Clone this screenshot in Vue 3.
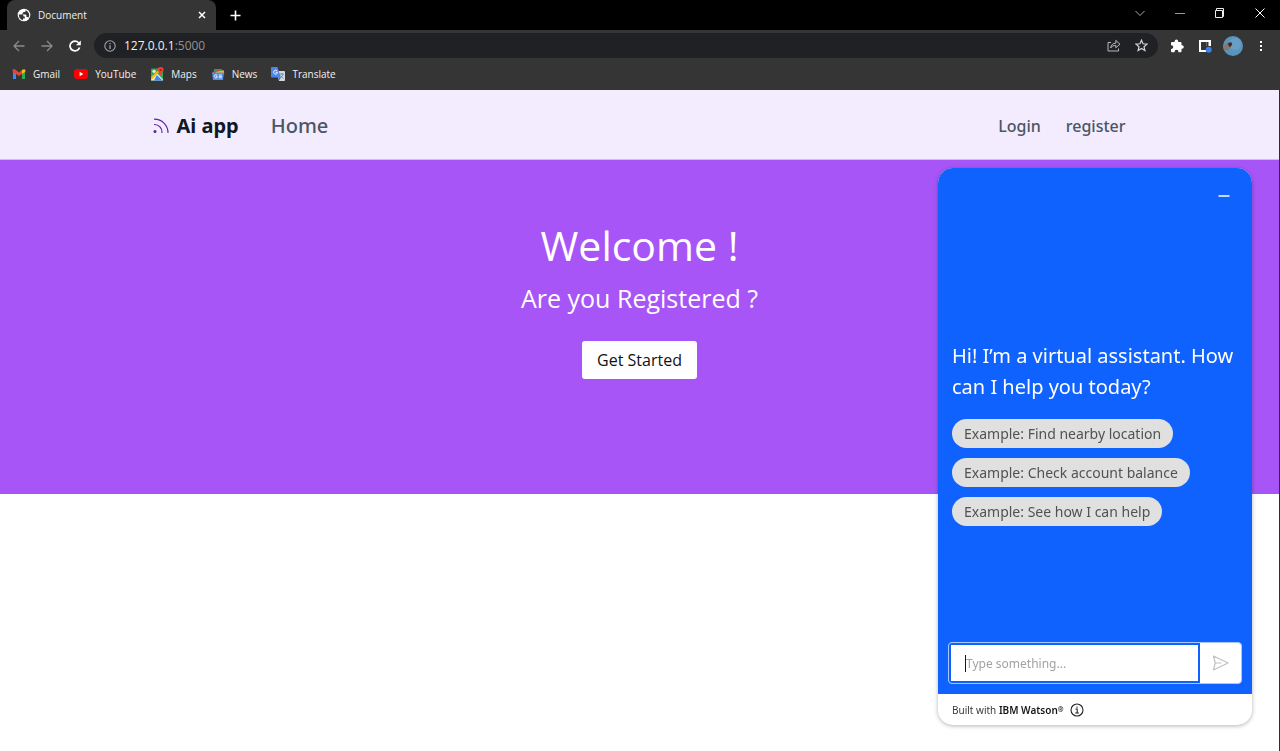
<script setup>
import { ref } from 'vue'

const message = ref('')
const bookmarks = ['Gmail', 'YouTube', 'Maps', 'News', 'Translate']
const examples = [
  'Example: Find nearby location',
  'Example: Check account balance',
  'Example: See how I can help',
]
</script>

<template>
  <div class="window">
    <header class="browser">
      <div class="tabstrip">
        <div class="tab">
          <svg class="globe" viewBox="0 0 14 14" width="14" height="14" aria-hidden="true">
            <circle cx="7" cy="7" r="6.3" fill="#fff" />
            <path d="M1.8 6.6 H4.6 Q6.6 6.6 6.6 8.6 H7.8 V10.4 H6 V12.2 Q2 11.4 1.8 6.6 Z M8.6 1.9 V3 Q8.6 4 7.4 4 H6.2 V5.4 H5 V6.4 H8.6 Q9.4 6.4 9.4 7.4 V9 H10.4 Q11 9 11.3 9.8 Q14 5 8.6 1.9 Z" fill="#353535" />
          </svg>
          <span class="tab-title">Document</span>
          <button class="plain" aria-label="Close tab">
            <svg viewBox="0 0 8 8" width="8" height="8"><path d="M1 1 L7 7 M7 1 L1 7" stroke="#fff" stroke-width="1.5" /></svg>
          </button>
        </div>
        <button class="plain new-tab" aria-label="New tab">
          <svg viewBox="0 0 11 11" width="11" height="11"><path d="M5.5 0.5 V10.5 M0.5 5.5 H10.5" stroke="#fff" stroke-width="1.6" /></svg>
        </button>
        <div class="window-controls">
          <button class="plain" aria-label="Search tabs">
            <svg viewBox="0 0 12 12" width="12" height="12"><path d="M1.5 4 L6 8.5 L10.5 4" fill="none" stroke="#aaa" /></svg>
          </button>
          <button class="plain" aria-label="Minimize">
            <svg viewBox="0 0 12 12" width="12" height="12"><path d="M1 6.5 H11" stroke="#999" /></svg>
          </button>
          <button class="plain" aria-label="Restore">
            <svg viewBox="0 0 12 12" width="12" height="12"><path d="M1.5 3.5 H8.5 V10.5 H1.5 Z M2.5 3 V1.5 H9.5 V9.5 H9" fill="none" stroke="#eee" /></svg>
          </button>
          <button class="plain" aria-label="Close">
            <svg viewBox="0 0 12 12" width="12" height="12"><path d="M1.5 1.5 L10.5 10.5 M10.5 1.5 L1.5 10.5" stroke="#fff" /></svg>
          </button>
        </div>
      </div>

      <div class="toolbar">
        <button class="plain" aria-label="Back">
          <svg viewBox="0 0 12 12" width="12" height="12"><path d="M11.5 6 H1 M6 1 L1 6 L6 11" fill="none" stroke="#8b8b8b" stroke-width="1.3" /></svg>
        </button>
        <button class="plain" aria-label="Forward">
          <svg viewBox="0 0 12 12" width="12" height="12"><path d="M0.5 6 H11 M6 1 L11 6 L6 11" fill="none" stroke="#8b8b8b" stroke-width="1.3" /></svg>
        </button>
        <button class="plain" aria-label="Reload">
          <svg viewBox="0 0 12 12" width="12" height="12"><path d="M10.6 7.4 A4.9 4.9 0 1 1 9.6 2.7" fill="none" stroke="#fff" stroke-width="1.7" /><path d="M11.8 0.4 V5.3 H6.9 Z" fill="#fff" /></svg>
        </button>
        <div class="address">
          <svg viewBox="0 0 12 12" width="12" height="12" aria-hidden="true"><circle cx="6" cy="6" r="5.2" fill="none" stroke="#a0a4a8" stroke-width="1.1" /><path d="M6 5.2 V9 M6 3 V4.2" stroke="#a0a4a8" stroke-width="1.3" /></svg>
          <span class="url">127.0.0.1<span class="port">:5000</span></span>
          <button class="plain" aria-label="Share">
            <svg viewBox="0 0 14 13" width="14" height="13"><path d="M4 3.5 H1 V12 H11.5 V9.5 M3.6 9 C4 5.8 6 4.2 8.8 4.2 V1.4 L13 5.2 L8.8 8.8 V6.4 C6.4 6.4 4.8 7.2 3.6 9 Z" fill="none" stroke="#b8b8b8" /></svg>
          </button>
          <button class="plain" aria-label="Bookmark this page">
            <svg viewBox="0 0 13 13" width="13" height="13"><path d="M6.5 1.2 L8 4.8 L12 5.1 L9 7.7 L9.9 11.6 L6.5 9.5 L3.1 11.6 L4 7.7 L1 5.1 L5 4.8 Z" fill="none" stroke="#d5d5d5" stroke-width="1.2" /></svg>
          </button>
        </div>
        <div class="extensions">
          <button class="plain" aria-label="Extensions">
            <svg viewBox="0 0 14 14" width="14" height="14"><path d="M1 4 Q1 3 2 3 H4.6 V2.4 A1.8 1.8 0 0 1 8.2 2.4 V3 H10.5 Q11.5 3 11.5 4 V6.2 H12 A1.8 1.8 0 0 1 12 9.8 H11.5 V12.2 Q11.5 13.2 10.5 13.2 H8.4 V12.6 A1.9 1.9 0 0 0 4.6 12.6 V13.2 H2 Q1 13.2 1 12.2 V9.9 H1.5 A1.8 1.8 0 0 0 1.5 6.3 H1 Z" fill="#fff" /></svg>
          </button>
          <button class="plain" aria-label="Side panel">
            <svg viewBox="0 0 14 14" width="14" height="14"><path d="M1 1 H13 V7 H8.5 V3 H3 V11 H8 V13 H1 Z" fill="#fff" /><path d="M8.5 3 H11 V7 H8.5 Z" fill="#353535" /><path d="M9 1 H13 V7 H10.5 V3 H9 Z" fill="#fff" /><circle cx="10.7" cy="10.7" r="3" fill="#3b82ec" /></svg>
          </button>
          <button class="plain" aria-label="Profile">
            <svg viewBox="0 0 20 20" width="20" height="20"><circle cx="10" cy="10" r="10" fill="#5795bd" /><circle cx="12" cy="8" r="6" fill="#679fc5" /><path d="M0.2 11 L4 6.8 L8.2 6 L9.6 8.2 L7.8 11.6 L4.7 14 L1.4 14.5 Z" fill="#88756d" /><path d="M5 7.2 L8.4 6.2 L9 8.5 L7 11 L5.6 9.5 Z" fill="#332b31" /></svg>
          </button>
          <button class="plain" aria-label="Menu">
            <svg viewBox="0 0 4 12" width="4" height="12"><path d="M1 1 h2 v2 h-2z M1 5 h2 v2 h-2z M1 9 h2 v2 h-2z" fill="#fff" /></svg>
          </button>
        </div>
      </div>

      <nav class="bookmarks" aria-label="Bookmarks">
        <a v-for="name in bookmarks" :key="name" href="#">
          <svg v-if="name === 'Gmail'" viewBox="0 0 14 14" width="14" height="14"><path d="M1 3 V12 H4 V5.5 Z" fill="#4285f4" /><path d="M13 3 V12 H10 V5.5 Z" fill="#34a853" /><path d="M0.7 3 Q1.5 1.5 3.2 2.5 L7 5.5 L10 3 V6.7 L7 9 L0.7 4.8 Z" fill="#ea4335" /><path d="M10 3 Q12.8 1.2 13.3 3.3 V4.8 L10 7 Z" fill="#fbbc04" /></svg>
          <svg v-else-if="name === 'YouTube'" viewBox="0 0 14 14" width="14" height="14"><rect y="2" width="14" height="10" rx="3" fill="#f00" /><path d="M5.6 4.8 L9.4 7 L5.6 9.2 Z" fill="#fff" /></svg>
          <svg v-else-if="name === 'Maps'" viewBox="0 0 14 14" width="14" height="14"><rect x="1" y="1.5" width="12" height="12" rx="1" fill="#34a853" /><path d="M1 12.5 L7.3 6.5 L13 12.5 V13.5 H1 Z" fill="#e8eaed" /><path d="M6.8 8 L12.6 13.5 H4 Z" fill="#4285f4" /><path d="M1 10 L9 2.5 L10 4 L1.5 12.8 Z" fill="#fbbc04" /><circle cx="4" cy="4.3" r="1.6" fill="#e8f4e8" /><path d="M10.6 0 A3 3 0 0 1 13.6 3 C13.6 5 11 5.8 10.6 9 C10.2 5.8 7.6 5 7.6 3 A3 3 0 0 1 10.6 0" fill="#ea4335" /><circle cx="10.6" cy="3" r="1" fill="#8c1d18" /></svg>
          <svg v-else-if="name === 'News'" viewBox="0 0 14 14" width="14" height="14"><path d="M3 2 H11 V6 H3 Z" fill="#2b9b56" /><path d="M1.5 5 L8.5 2.4 L10 6 L2 7 Z" fill="#ea4335" /><path d="M5 5 L12.8 3.2 L13.2 7 H5 Z" fill="#fbbc04" /><path d="M1 5.5 H13 L12 13 H2 Z" fill="#548fe9" /><path d="M6.1 8.2 A1.6 1.6 0 1 0 6.1 10.5 V9.4 H5 M7.8 8 H10.8 M7.8 9.4 H11 M7.8 10.8 H10.8" fill="none" stroke="#fff" stroke-width="0.8" /></svg>
          <svg v-else viewBox="0 0 14 14" width="14" height="14"><path d="M5 4 H13 Q14 4 14 5 V13 Q14 14 13 14 H8 Z" fill="#d5d9df" /><path d="M0 1 Q0 0 1 0 H6.5 L9.8 10.5 H1 Q0 10.5 0 9.5 Z" fill="#4b86e8" /><path d="M6.3 4 A2 2 0 1 0 6.4 6.2 V5.3 H4.7" fill="none" stroke="#fff" stroke-width="0.9" /><path d="M8.7 7 H13 M10.8 6 V7 M12 7 Q11.4 9.8 8.8 11.6 M9.5 8.5 L12.5 11.8" fill="none" stroke="#6b7f91" stroke-width="0.8" /><path d="M7.2 10.5 H9.8 L8 13.8 Z" fill="#3367d6" /></svg>
          {{ name }}
        </a>
      </nav>
    </header>

    <div class="page">
      <nav class="site-nav" aria-label="Main">
        <a class="brand" href="#">
          <svg viewBox="0 0 16 16" width="16" height="16" aria-hidden="true"><circle cx="2" cy="13.5" r="1.5" fill="#5b21a0" /><path d="M1.5 6.5 A7.5 7.5 0 0 1 9 14.5 M1.5 1.2 A13.5 13.5 0 0 1 15 14.5" fill="none" stroke="#5b21a0" stroke-width="1.2" stroke-linecap="round" /></svg>
          Ai app
        </a>
        <a class="home" href="#">Home</a>
        <div class="account">
          <a href="#">Login</a>
          <a href="#">register</a>
        </div>
      </nav>

      <main class="hero">
        <h1>Welcome !</h1>
        <h2>Are you Registered ?</h2>
        <button class="start">Get Started</button>
      </main>
    </div>

    <aside class="chat" aria-label="Virtual assistant">
      <div class="chat-home">
        <button class="plain minimize" aria-label="Minimize chat">
          <svg viewBox="0 0 12 12" width="12" height="12"><path d="M0.5 6 H11.5" stroke="#fff" stroke-width="1.3" /></svg>
        </button>
        <div class="conversation">
          <p class="greeting">Hi! I’m a virtual assistant. How can I help you today?</p>
          <button v-for="text in examples" :key="text" class="example">{{ text }}</button>
        </div>
        <form class="composer" @submit.prevent>
          <div class="field">
            <span class="caret"></span>
            <input v-model="message" type="text" placeholder="Type something..." aria-label="Type something" />
          </div>
          <button class="plain send" aria-label="Send">
            <svg viewBox="0 0 18 16" width="18" height="16"><path d="M1.5 1 L16 8 L1.5 15 L3.2 8 Z M3.2 8 H9.5" fill="none" stroke="#c1c1c1" stroke-width="1.2" stroke-linejoin="round" /></svg>
          </button>
        </form>
      </div>
      <footer class="chat-footer">
        <span>Built with <strong>IBM Watson<span class="mark">®</span></strong></span>
        <button class="plain" aria-label="About">
          <svg viewBox="0 0 14 14" width="14" height="14"><circle cx="7" cy="7" r="6" fill="none" stroke="#222" stroke-width="1.1" /><path d="M5.5 6 H7.2 V10 M5.2 10 H8.9 M7 3.4 V4.7" fill="none" stroke="#222" stroke-width="1.1" /></svg>
        </button>
      </footer>
    </aside>
  </div>
</template>

<style>
body {
  margin: 0;
  background: #fff;
}
</style>

<style scoped>
* {
  box-sizing: border-box;
}

.window {
  display: flex;
  flex-direction: column;
  min-height: 100vh;
  font-family: 'Open Sans', 'Noto Sans', sans-serif;
}

a {
  color: inherit;
  text-decoration: none;
}

svg {
  display: block;
  flex: none;
}

.plain {
  display: grid;
  place-items: center;
  flex: none;
  padding: 0;
  border: 0;
  background: none;
}

.browser {
  background: #353535;
  color: #f1f1f1;
  font-size: 10px;
}

.tabstrip {
  display: flex;
  align-items: stretch;
  height: 30px;
  padding-left: 7px;
  background: #000;
}

.tab {
  display: flex;
  align-items: center;
  gap: 7px;
  width: 209px;
  padding: 0 10px;
  border-radius: 8px 8px 0 0;
  background: #353535;
}

.tab-title {
  flex: 1;
}

.new-tab {
  margin-left: 14px;
}

.window-controls {
  display: flex;
  gap: 28px;
  margin-left: auto;
  padding: 0 14px 4px 0;
}

.toolbar {
  display: flex;
  align-items: center;
  gap: 16px;
  height: 31px;
  padding: 0 9px 0 13px;
}

.address {
  display: flex;
  flex: 1;
  align-items: center;
  gap: 14px;
  height: 25px;
  margin-left: -3px;
  padding: 0 10px;
  border-radius: 13px;
  background: #202124;
  font-size: 12px;
}

.url {
  flex: 1;
  margin-left: -6px;
}

.port {
  color: #929292;
}

.extensions {
  display: flex;
  align-items: center;
  gap: 8px;
  margin-left: -7px;
}

.extensions .plain {
  width: 20px;
}

.bookmarks {
  display: flex;
  align-items: center;
  gap: 14px;
  height: 29px;
  padding: 0 12px 4px;
}

.bookmarks a {
  display: flex;
  align-items: center;
  gap: 7px;
}

.page {
  flex: 1;
  border-right: 1px solid #2e2a36;
}

.site-nav {
  display: flex;
  align-items: center;
  height: 70px;
  padding: 2px 12% 0;
  border-bottom: 1px solid #d8b4fe;
  background: #f3ecff;
  color: #4b5563;
  font-family: 'Noto Sans', 'Open Sans', sans-serif;
  font-size: 20px;
  font-weight: 500;
}

.brand {
  display: flex;
  align-items: center;
  gap: 7px;
  color: #111827;
  font-weight: 700;
}

.home {
  margin-left: 32px;
}

.account {
  display: flex;
  gap: 25px;
  margin-left: auto;
  font-size: 16px;
}

.hero {
  display: flex;
  flex-direction: column;
  align-items: center;
  min-height: 334px;
  padding-top: 57px;
  background: #a855f7;
  color: #fff;
}

h1,
h2 {
  margin: 0;
  font-weight: 400;
}

h1 {
  font-size: 41px;
  line-height: 56px;
}

h2 {
  margin-top: 6px;
  font-size: 25px;
  line-height: 38px;
}

.start {
  height: 38px;
  margin-top: 24px;
  padding: 0 15px;
  border: 0;
  border-radius: 3px;
  background: #fff;
  color: #111;
  font-family: inherit;
  font-size: 16px;
}

.chat {
  position: fixed;
  right: 28px;
  bottom: 26px;
  display: flex;
  flex-direction: column;
  width: 314px;
  height: 557px;
  max-height: calc(100vh - 52px);
  overflow: hidden;
  border-radius: 15px;
  background: #fff;
  box-shadow: 0 1px 4px rgba(0, 0, 0, 0.3);
  font-family: 'Noto Sans', sans-serif;
}

.chat-home {
  display: flex;
  flex: 1;
  flex-direction: column;
  padding: 10px;
  background: #0f62fe;
}

.minimize {
  align-self: flex-end;
  width: 36px;
  height: 36px;
}

.conversation {
  display: flex;
  flex: 1;
  flex-direction: column;
  align-items: flex-start;
  justify-content: center;
  gap: 10px;
  padding: 10px 0 0 4px;
}

.greeting {
  margin: 0 0 7px;
  color: #fff;
  font-size: 20px;
  line-height: 31px;
}

.example {
  height: 29px;
  padding: 0 12px;
  border: 0;
  border-radius: 15px;
  background: #e0e0e0;
  color: #525252;
  font-family: inherit;
  font-size: 14px;
}

.composer {
  display: flex;
  height: 42px;
  overflow: hidden;
  border: 1px solid #a6c8ff;
  border-radius: 4px;
  background: #fff;
}

.field {
  display: flex;
  flex: 1;
  align-items: center;
  min-width: 0;
  padding-left: 14px;
  border: 2px solid #0f62fe;
}

.caret {
  width: 1px;
  height: 17px;
  background: #161616;
}

input {
  flex: 1;
  min-width: 0;
  padding: 0;
  border: 0;
  outline: 0;
  background: none;
  color: #161616;
  font-family: inherit;
  font-size: 12px;
}

input::placeholder {
  color: #a2a2a2;
  opacity: 1;
}

.send {
  width: 41px;
}

.chat-footer {
  display: flex;
  align-items: center;
  gap: 6px;
  height: 31px;
  padding: 0 14px;
  color: #393939;
  font-size: 10px;
}

.chat-footer strong {
  color: #161616;
  font-weight: 600;
}

.mark {
  font-size: 7px;
  vertical-align: 2px;
}
</style>
